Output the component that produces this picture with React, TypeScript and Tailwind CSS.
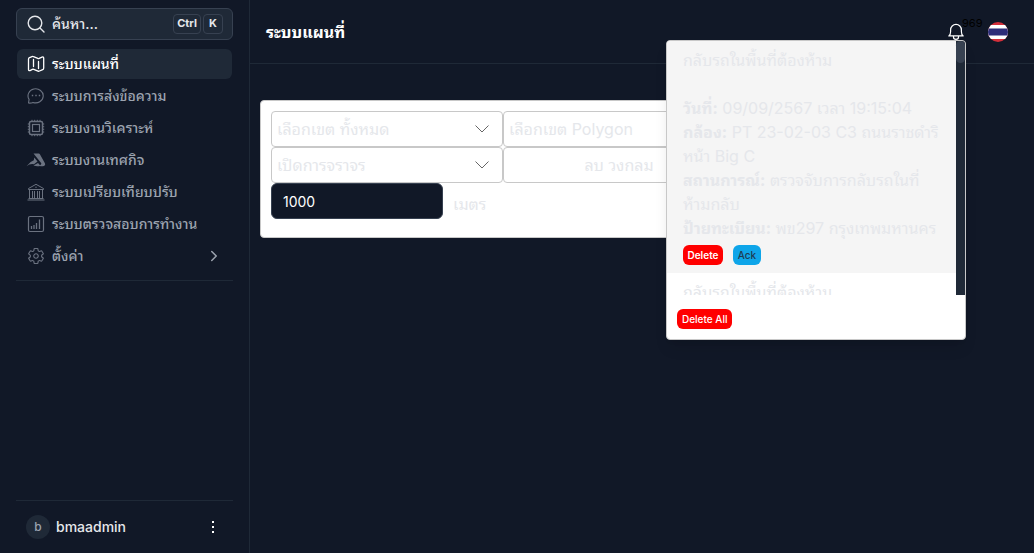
import { useState } from 'react';
import type { ReactNode } from 'react';
import { ChevronRight } from 'lucide-react';
import { IoSettingsOutline } from 'react-icons/io5';

const pageFont = "font-['Inter','Noto_Sans_Thai_Looped','Noto_Sans_Thai','Noto_Sans',sans-serif]";

function SearchIcon() {
  return (
    <svg viewBox="0 0 18 18" className="size-[18px] shrink-0" fill="none" stroke="currentColor" strokeWidth="1.4">
      <circle cx="8" cy="8" r="6.800" />
      <path d="M13 13l4 4" strokeLinecap="round" />
    </svg>
  );
}

function MapIcon() {
  return (
    <svg viewBox="0 0 18 18" className="size-[18px]" fill="none" stroke="currentColor" strokeWidth="1.3" strokeLinejoin="round" strokeLinecap="round">
      <path d="M1.500 4.200Q1.500 3 2.500 2.600L5 1.600Q5.800 1.300 6.500 1.700L10.800 3.400Q11.500 3.700 12.200 3.400L15 2.100Q16.700 1.600 16.700 3.200V13Q16.700 14.300 15.700 14.700L12.500 16Q11.700 16.400 11 16.100L6.800 14.400Q6 14.100 5.400 14.400L3 15.600Q1.500 16.100 1.500 14.500zM6.500 4.500v7M11.500 6.500v7" />
    </svg>
  );
}

function ChatIcon() {
  return (
    <svg viewBox="0 0 18 18" className="size-[18px]" fill="none" stroke="currentColor">
      <path d="M1.500 16l.6-3.600A7.600 7 0 1 1 6 15.400Q4 16.300 1.500 16z" strokeLinejoin="round" strokeWidth="1.1" />
      <path d="M4.800 8.500h1.400M8.300 8.500h1.400M11.800 8.500h1.400" strokeWidth="1.400" />
    </svg>
  );
}

function ChipIcon() {
  return (
    <svg viewBox="0 0 18 18" className="size-[18px]" fill="none" stroke="currentColor">
      <rect x="2.500" y="2.500" width="13" height="13" rx="1.500" strokeWidth="1.500" />
      <rect x="5.500" y="5.500" width="7" height="7" strokeWidth="1.200" />
      <path d="M5 .8v1.500M7.700 .8v1.500M10.300 .8v1.500M13 .8v1.500M5 15.700v1.500M7.700 15.700v1.500M10.300 15.700v1.500M13 15.700v1.500M.8 5h1.500M.8 7.700h1.500M.8 10.300h1.500M.8 13h1.500M15.700 5h1.500M15.700 7.700h1.500M15.700 10.300h1.500M15.700 13h1.500" />
    </svg>
  );
}

function SailIcon() {
  return (
    <svg viewBox="0 0 20 14" className="h-3.5 w-5" fill="currentColor">
      <path d="M7.500 .5h5.200q.8 0 1.200.8l5 8.900q1 2-1 2.800-2.400.8-4.500-.2l1.500-1.200q.8-.6.200-1.500z" />
      <path d="M8.300 4.500l3.200 4-3.500 2.700Q4 10.300.5 13.200 3.500 8.800 7.800 7.300z" />
      <path d="M7.500 12.500l4.500-2.500 2.500 2.700q-3 1.300-7-.2z" />
    </svg>
  );
}

function BankIcon() {
  return (
    <svg viewBox="0 0 18 18" className="size-[18px]" fill="none" stroke="currentColor">
      <path d="M1.500 5.500L9 1.300l7.500 4.200v1h-15zM2.500 7v8.500M5.500 8v7.500M7.500 8v7.500M10.500 8v7.500M12.500 8v7.500M15.500 7v8.500M1.500 15.500h15M.5 17h17" />
      <circle cx="9" cy="4.300" r=".7" fill="currentColor" stroke="none" />
    </svg>
  );
}

function ChartIcon() {
  return (
    <svg viewBox="0 0 18 18" className="size-[18px]" fill="none" stroke="currentColor">
      <rect x="1.500" y="1.500" width="15" height="15" rx="1.500" strokeWidth="1.200" />
      <path d="M4.500 14v-3M7 14v-4M9.500 14v-6M12.500 14V4.500" strokeWidth="1.300" />
    </svg>
  );
}

function BellIcon() {
  return (
    <svg viewBox="0 0 16 18" className="h-[18px] w-4" fill="none" stroke="currentColor" strokeWidth="1.200" strokeLinejoin="round">
      <path d="M.8 12.900q1.800-1.200 1.800-4.200V7A5.400 5.600 0 0 1 13.400 7v1.700q0 3 1.800 4.200z" />
      <path d="M5.500 13v1.300q0 2 2.500 2t2.500-2V13" />
    </svg>
  );
}

function Flag() {
  return (
    <svg viewBox="0 0 20 20" className="size-5" role="img" aria-label="ไทย">
      <defs>
        <clipPath id="round">
          <circle cx="10" cy="10" r="10" />
        </clipPath>
      </defs>
      <g clipPath="url(#round)">
        <path fill="#d32f3a" d="M0 0h20v20H0z" />
        <path fill="#fff" d="M0 3h20v14H0z" />
        <path fill="#2d2d78" d="M0 6.500h20v7H0z" />
      </g>
    </svg>
  );
}

const navItems: { label: string; icon: ReactNode }[] = [
  { label: 'ระบบแผนที่', icon: <MapIcon /> },
  { label: 'ระบบการส่งข้อความ', icon: <ChatIcon /> },
  { label: 'ระบบงานวิเคราะห์', icon: <ChipIcon /> },
  { label: 'ระบบงานเทศกิจ', icon: <SailIcon /> },
  { label: 'ระบบเปรียบเทียบปรับ', icon: <BankIcon /> },
  { label: 'ระบบตรวจสอบการทำงาน', icon: <ChartIcon /> },
  { label: 'ตั้งค่า', icon: <IoSettingsOutline className="size-[18px]" /> },
];

function Sidebar() {
  return (
    <aside className="flex w-[250px] shrink-0 flex-col border-r border-[#1f2937] px-4 pt-2">
      <button className="flex h-8 items-center gap-[7px] rounded-md border border-[#374151] bg-[#1f2937] pr-[9px] pl-2.5 text-sm font-medium text-[#e5e7eb]">
        <SearchIcon />
        <span>ค้นหา...</span>
        <span className="ml-auto flex gap-0.5 text-[11px]">
          <kbd className="flex h-5 items-center rounded border border-[#374151] px-[3px] font-['Inter',sans-serif] font-bold">Ctrl</kbd>
          <kbd className="flex h-5 w-5 items-center justify-center rounded border border-[#374151] font-['Inter',sans-serif] font-bold">K</kbd>
        </span>
      </button>
      <nav className="mt-[9px] flex flex-col gap-0.5 border-b border-[#1f2937] pb-[9px]">
        {navItems.map((item, i) => (
          <a
            key={item.label}
            href="#"
            className={`mx-px flex h-[30px] items-center gap-1.5 rounded-md px-[9px] text-sm font-medium ${i === 0 ? 'bg-[#1f2937] text-white' : 'text-[#9ca3af]'}`}
          >
            <span className={`flex w-5 shrink-0 justify-center ${i === 0 ? '' : 'text-[#6b7280]'}`}>{item.icon}</span>
            <span>{item.label}</span>
            {i === 6 && <ChevronRight className="ml-auto size-[18px]" strokeWidth={2} />}
          </a>
        ))}
      </nav>
      <footer className="mt-auto flex h-[53px] items-center gap-1.5 border-t border-[#1f2937] px-2.5 text-sm font-medium text-[#e5e7eb]">
        <span className="flex size-6 items-center justify-center rounded-full bg-[#1f2937] text-xs text-[#9ca3af]">b</span>
        <span>bmaadmin</span>
        <button aria-label="เมนูผู้ใช้" className="ml-auto flex w-5 flex-col items-center gap-[3px]">
          <span className="size-0.5 bg-white" />
          <span className="size-0.5 bg-white" />
          <span className="size-0.5 bg-white" />
        </button>
      </footer>
    </aside>
  );
}

function Picker({ label }: { label: string }) {
  return (
    <div className="relative">
      <select
        aria-label={label}
        className="h-9 w-full appearance-none rounded border border-[#c8c8c8] bg-white px-[5px] text-base text-[#e5e7eb]"
      >
        <option>{label}</option>
      </select>
      <svg viewBox="0 0 14 8" className="pointer-events-none absolute top-3.5 right-3.5 h-2 w-3.5" fill="none" stroke="#666">
        <path d="M.5 .5L7 7l6.500-6.500" />
      </svg>
    </div>
  );
}

function MapFilters() {
  const [radius, setRadius] = useState('1000');
  return (
    <section className="mx-2.5 mt-9 max-w-[600px] rounded-sm border border-[#c8c8c8] bg-white p-2.5 pb-[18px] text-[#e5e7eb]">
      <div className="grid grid-cols-[232px_232px]">
        <Picker label="เลือกเขต ทั้งหมด" />
        <Picker label="เลือกเขต Polygon" />
        <Picker label="เปิดการจราจร" />
        <button className="h-9 rounded border border-[#c8c8c8]">ลบ วงกลม</button>
      </div>
      <label className="flex items-center gap-2.5">
        <input
          value={radius}
          onChange={(e) => setRadius(e.target.value)}
          className="h-9 w-[172px] rounded-md border border-[#374151] bg-[#111827] px-[11px] text-sm text-white"
        />
        <span className="pt-1.5">เมตร</span>
      </label>
    </section>
  );
}

function Notice() {
  return (
    <article className="bg-[#f5f5f5] px-4 pt-[7px] pb-2">
      <h2>กลับรถในพื้นที่ต้องห้าม</h2>
      <p className="mt-6">
        <b>วันที่:</b> 09/09/2567 เวลา 19:15:04
        <br />
        <b>กล้อง:</b> PT 23-02-03 C3 ถนนราชดำริ หน้า Big C
        <br />
        <b>สถานการณ์:</b> ตรวจจับการกลับรถในที่ห้ามกลับ
        <br />
        <b>ป้ายทะเบียน:</b> พข297 กรุงเทพมหานคร
      </p>
      <div className="mt-[5px] flex gap-2.5 text-[10px] font-semibold">
        <button className="h-5 w-10 rounded-md bg-[#ff0000] text-white">Delete</button>
        <button className="h-5 w-7 rounded-md bg-[#0ea5e9] font-medium text-[#1f3a52]">Ack</button>
      </div>
    </article>
  );
}

function Notifications() {
  return (
    <div className="absolute top-10 right-[68px] w-[300px] overflow-hidden rounded border border-[#c8c8c8] bg-white text-base text-[#e5e7eb] shadow-lg">
      <div className="flex h-[254px]">
        <div className="min-w-0 flex-1 overflow-hidden">
          <Notice />
          <article className="px-4 pt-[7px]">
            <h2>กลับรถในพื้นที่ต้องห้าม</h2>
          </article>
        </div>
        <div className="w-[9px] shrink-0 bg-[#1f2937]">
          <div className="h-[22px] rounded-full bg-[#374151]" />
        </div>
      </div>
      <div className="flex px-2.5 pt-3.5 pb-2.5">
        <button className="h-5 rounded-md bg-[#ff0000] px-[5px] text-[10px] font-medium text-white">Delete All</button>
      </div>
    </div>
  );
}

export default function App() {
  return (
    <div className={`relative flex min-h-screen bg-[#111827] ${pageFont}`}>
      <Sidebar />
      <main className="min-w-0 flex-1">
        <header className="flex h-16 items-center border-b border-[#1f2937] px-4">
          <h1 className="text-base font-bold text-white">ระบบแผนที่</h1>
          <div className="ml-auto flex items-center gap-6 pr-2.5">
            <button aria-label="การแจ้งเตือน" className="relative text-white">
              <BellIcon />
              <span className="absolute -top-1.5 left-3.5 text-[11px] leading-3 text-black">969</span>
            </button>
            <Flag />
          </div>
        </header>
        <MapFilters />
      </main>
      <Notifications />
    </div>
  );
}
